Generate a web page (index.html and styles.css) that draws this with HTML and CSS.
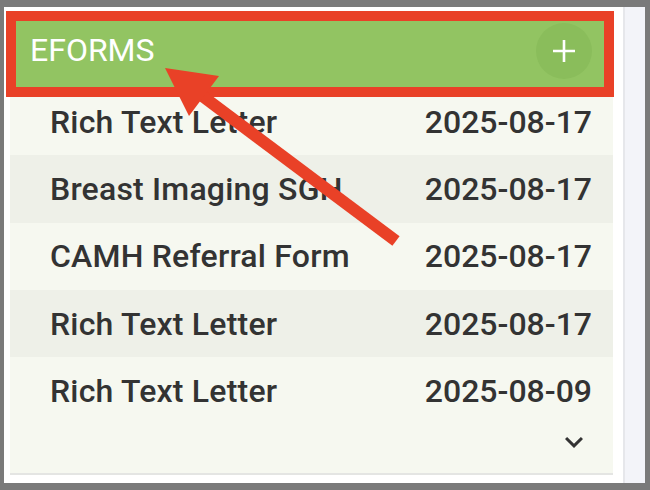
FILE: index.html
```html
<!DOCTYPE html>
<html lang="en">
<head>
  <meta charset="UTF-8">
  <title>eForms</title>
  <link rel="stylesheet" href="styles.css">
</head>
<body>
  <div class="frame">
    <main class="content">
      <section class="eforms">
        <header class="eforms-head">
          <h2>EFORMS</h2>
          <button class="add-btn" type="button" aria-label="Add eForm">
            <svg width="24" height="24" viewBox="0 0 24 24"><path d="M12 1v22M1 12h22" stroke="#fff" stroke-width="2.6" fill="none"/></svg>
          </button>
        </header>
        <ul class="eform-list">
          <li><span class="name">Rich Text Letter</span><span class="date">2025-08-17</span></li>
          <li><span class="name">Breast Imaging SGH</span><span class="date">2025-08-17</span></li>
          <li><span class="name">CAMH Referral Form</span><span class="date">2025-08-17</span></li>
          <li><span class="name">Rich Text Letter</span><span class="date">2025-08-17</span></li>
          <li><span class="name">Rich Text Letter</span><span class="date">2025-08-09</span></li>
        </ul>
        <div class="list-foot">
          <button class="more-btn" type="button" aria-label="Show more">
            <svg width="36" height="36" viewBox="0 0 24 24"><path d="M16.59 8.59 12 13.17 7.41 8.59 6 10l6 6 6-6z" fill="#333"/></svg>
          </button>
        </div>
      </section>

      <!-- highlight around the header, with a pointer to the title -->
      <div class="callout-box"></div>
      <svg class="callout-arrow" width="619" height="476" viewBox="0 0 619 476">
        <line x1="193" y1="85" x2="392" y2="234" stroke="#e94127" stroke-width="12"/>
        <polygon points="161,61 215,69 185,109" fill="#e94127"/>
      </svg>
    </main>
    <div class="divider"></div>
    <aside class="sidebar"></aside>
  </div>
</body>
</html>
```

FILE: styles.css
```css
body {
  margin: 0;
  background: #7a7a7a;
  font-family: Roboto, "Liberation Sans", sans-serif;
}
.frame {
  display: flex;
  height: 476px;
  margin: 7px 5px 7px 4px;
}
.content {
  flex: 1;
  position: relative;
  background: #fff;
  padding: 4px 10px 0 6px;
}
.divider {
  width: 2px;
  background: #e6e7eb;
}
.sidebar {
  width: 20px;
  background: #f3f4f9;
}

.eforms {
  border-bottom: 2px solid #e4e5e3;
}
.eforms-head {
  display: flex;
  align-items: center;
  justify-content: space-between;
  height: 77px;
  padding: 0 21px 0 20px;
  background: #92c462;
}
.eforms-head h2 {
  margin: 0;
  font-size: 32px;
  font-weight: 400;
  color: #fff;
}
.add-btn {
  display: flex;
  align-items: center;
  justify-content: center;
  width: 56px;
  height: 56px;
  margin-top: 3px;
  padding: 0;
  border: none;
  border-radius: 50%;
  background: #8abd5b;
}

.eform-list {
  list-style: none;
  margin: 0;
  padding: 0;
}
.eform-list li {
  display: flex;
  align-items: center;
  justify-content: space-between;
  height: 67.3px;
  padding: 0 21px 0 40px;
  background: #f6f8f0;
  font-size: 32px;
  font-weight: 500;
  color: #333;
}
.eform-list li:nth-child(even) {
  background: #eef0e8;
}
.eform-list .name {
  letter-spacing: 0.2px;
}

.list-foot {
  display: flex;
  justify-content: flex-end;
  height: 48.5px;
  padding-right: 21px;
  background: #f6f8f0;
}
.more-btn {
  width: 36px;
  height: 36px;
  padding: 0;
  border: none;
  background: none;
}
.more-btn svg {
  display: block;
}

.callout-box {
  position: absolute;
  left: 2px;
  top: 4px;
  width: 608px;
  height: 86px;
  box-sizing: border-box;
  border: 10px solid #e94127;
}
.callout-arrow {
  position: absolute;
  left: 0;
  top: 0;
}
```
